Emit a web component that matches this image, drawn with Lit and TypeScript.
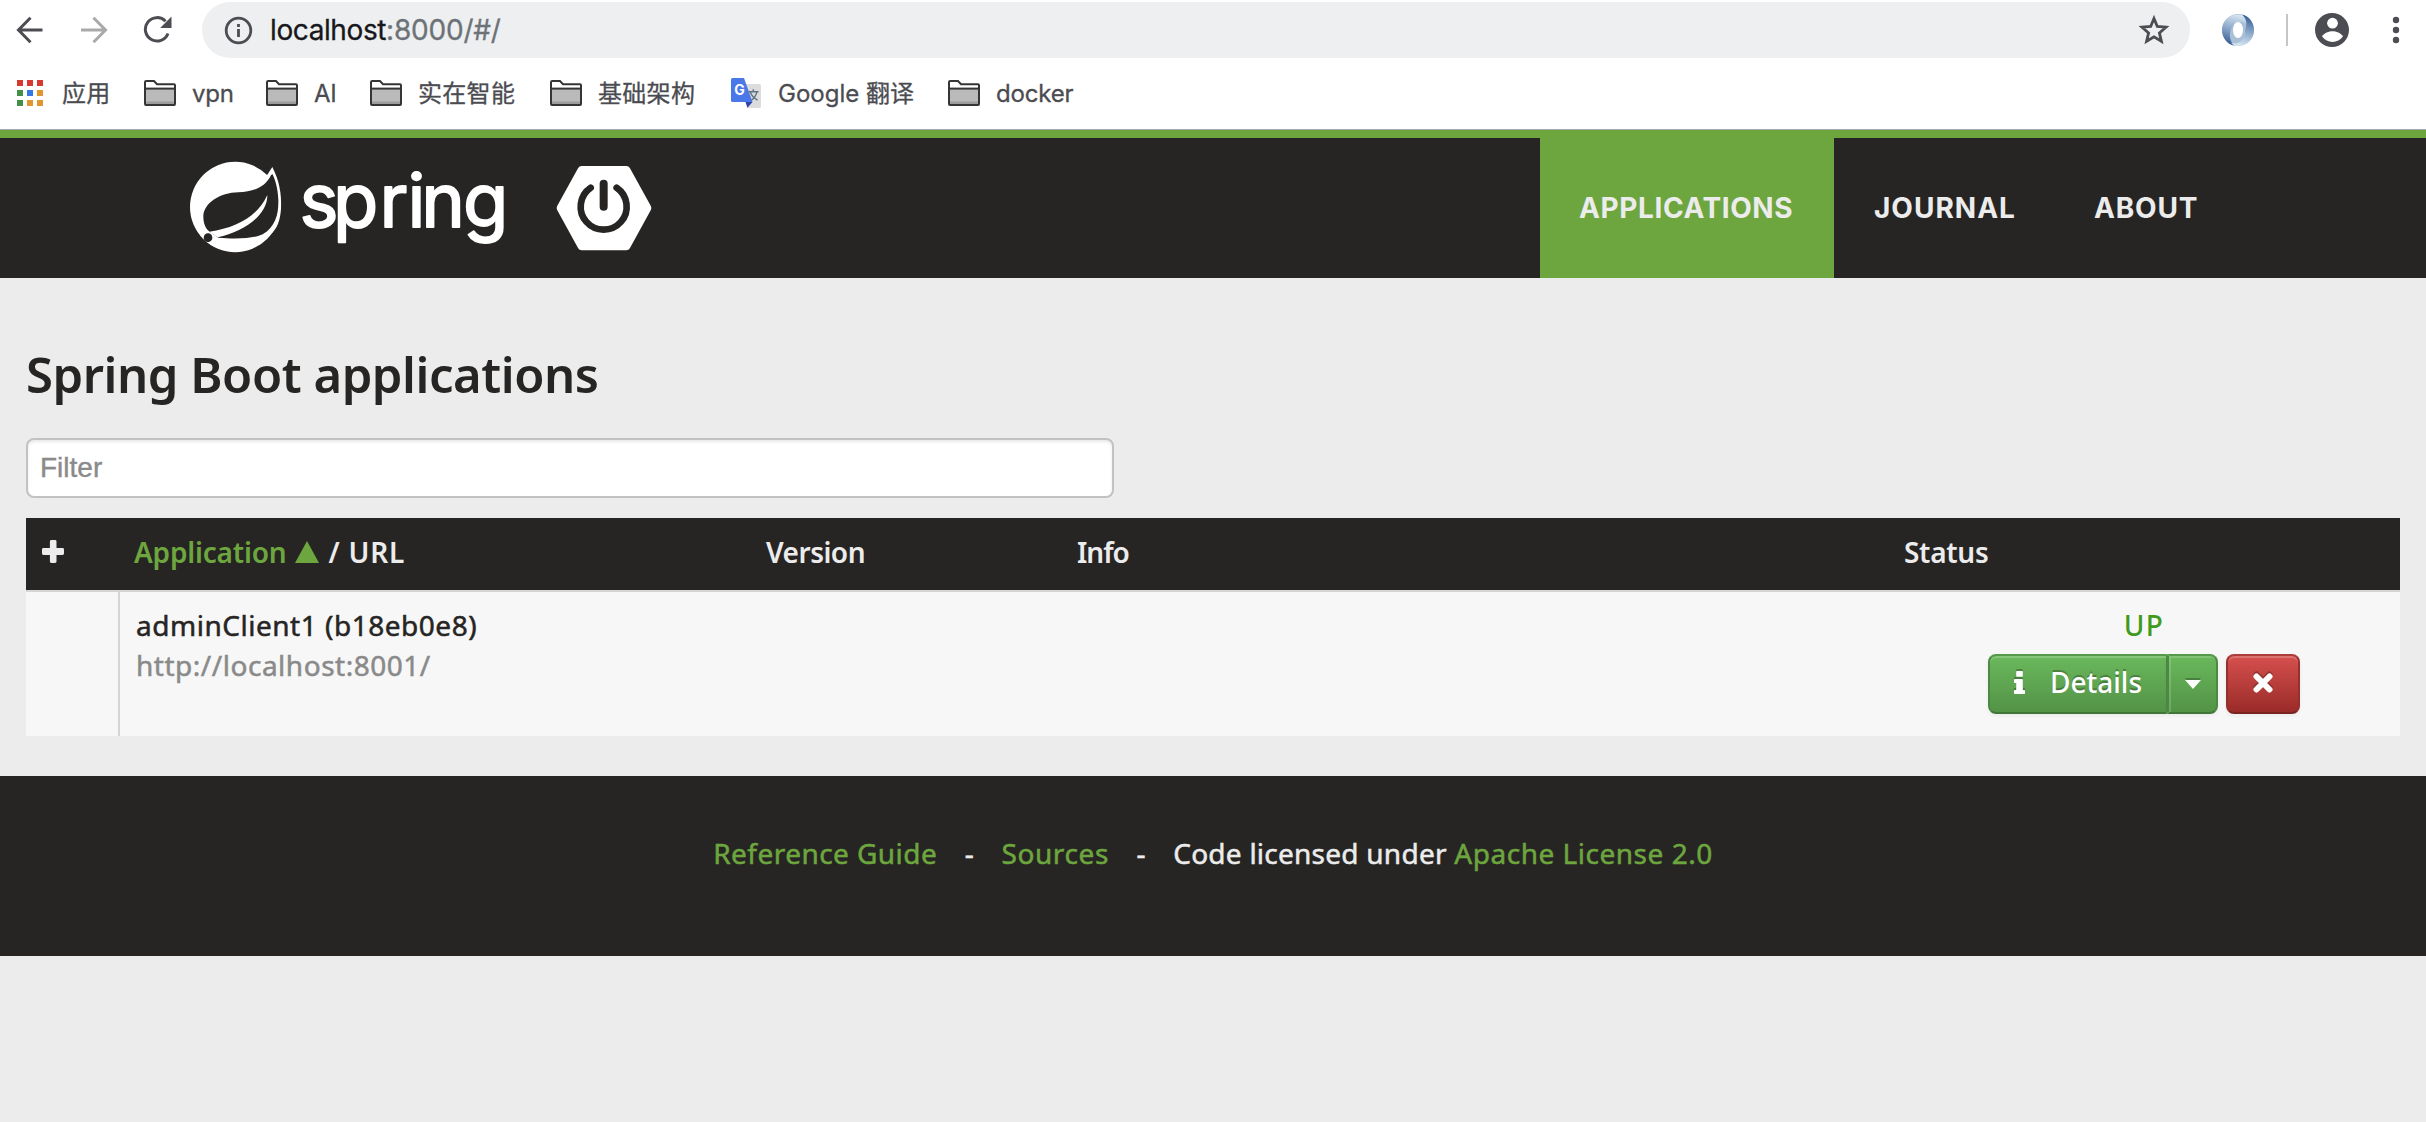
import { LitElement, html, css, svg } from "lit";
import { customElement, property } from "lit/decorators.js";

const folderIcon = html`<svg class="folder" width="32" height="26" viewBox="0 0 32 26">
  <path d="M1 24V2.2Q1 1 2.2 1H10l3 3.2h17q1 0 1 1V24q0 1-1 1H2q-1 0-1-1z" fill="#fff" stroke="#353535" stroke-width="2" />
  <path d="M2 9h28v15H2z" fill="#bababa" />
  <path d="M2 21.5h28V24H2z" fill="#9c9c9c" />
  <path d="M1 8.6h30" stroke="#353535" stroke-width="2" />
</svg>`;

const translateIcon = html`<svg class="translate" width="30" height="30" viewBox="0 0 30 30">
  <path d="M10 6h18.5Q30 6 30 7.500V28.500Q30 30 28.500 30H16z" fill="#dcdcdc" />
  <path d="M14.500 24H21.500L16.500 29.800z" fill="#3043a8" />
  <path d="M1.500 0H13l8.500 24H1.500Q0 24 0 22.500V1.500Q0 0 1.500 0z" fill="#4a78e8" />
  <text class="g" x="3.300" y="16.500">G</text>
  <g fill="none" stroke="#5b7480" stroke-width="1.400">
    <path d="M17.500 13.700H27.500M22.300 11.300V13.700M26 13.700C25 18 22.500 20.800 20.500 22.300M19.300 14C20.500 17.500 23.500 20.500 26.500 22" />
  </g>
</svg>`;

const appsIcon = html`<svg class="apps" width="26" height="26" viewBox="0 0 26 26">
  ${[
    ["#d93831", "#d93831", "#d93831"],
    ["#438e49", "#3577ea", "#e0952d"],
    ["#438e49", "#e0952d", "#e0952d"],
  ].map((row, r) => row.map((c, i) => svg`<rect x=${i * 10} y=${r * 10} width="6" height="6" fill=${c} />`))}
</svg>`;

interface Bookmark {
  label: string;
  kind: "apps" | "folder" | "translate";
  cls: string;
}

const bookmarks: Bookmark[] = [
  { label: "应用", kind: "apps", cls: "b-apps" },
  { label: "vpn", kind: "folder", cls: "b-vpn" },
  { label: "AI", kind: "folder", cls: "b-ai" },
  { label: "实在智能", kind: "folder", cls: "b-shizai" },
  { label: "基础架构", kind: "folder", cls: "b-infra" },
  { label: "Google 翻译", kind: "translate", cls: "b-google" },
  { label: "docker", kind: "folder", cls: "b-docker" },
];

@customElement("browser-chrome")
export class BrowserChrome extends LitElement {
  static styles = css`
    :host {
      display: block;
      box-sizing: border-box;
      height: 130px;
      background: #fff;
      border-bottom: 1px solid #a9a9ad;
      font-family: Inter, "Noto Sans CJK SC", sans-serif;
    }
    svg { display: block; flex: none; }
    .toolbar { display: flex; align-items: center; height: 60px; padding-left: 16px; }
    .forward { margin-left: 36px; }
    .reload { margin-left: 35px; }
    .omnibox {
      display: flex;
      align-items: center;
      box-sizing: border-box;
      width: 1988px;
      height: 56px;
      margin-left: 29px;
      padding: 0 20px 0 22px;
      border-radius: 28px;
      background: #eeeff1;
    }
    .url { flex: 1; margin-left: 16px; font-size: 28px; line-height: 56px; color: #17181b; letter-spacing: -0.4px; -webkit-text-stroke: 0.3px currentColor; }
    .port { color: #6d7277; letter-spacing: -0.2px; }
    .ext { margin-left: 32px; }
    .rule { width: 2px; height: 32px; margin-left: 32px; background: #c6c6c8; }
    .avatar { margin-left: 27px; }
    .menu { margin-left: 43px; }
    .bookmarks { display: flex; height: 66px; align-items: center; padding-left: 17px; }
    .item { display: flex; align-items: center; flex: none; font-size: 24px; line-height: 36px; color: #4b4c51; -webkit-text-stroke: 0.3px #4b4c51; letter-spacing: -0.2px; white-space: nowrap; }
    .item span { padding-top: 1px; }
    .b-apps { width: 127px; gap: 19px; letter-spacing: 0.200px; }
    .b-vpn { width: 122px; gap: 16px; }
    .b-ai { width: 104px; gap: 16px; }
    .b-shizai { width: 180px; gap: 16px; letter-spacing: 0.300px; }
    .b-infra { width: 181px; gap: 16px; letter-spacing: 0.300px; }
    .b-google { width: 217px; gap: 17px; letter-spacing: 0; }
    .b-docker { gap: 16px; }
    .g { font: 700 14px Inter, sans-serif; fill: #fff; stroke: none; }
  `;

  private icon(kind: Bookmark["kind"]) {
    return kind === "apps" ? appsIcon : kind === "folder" ? folderIcon : translateIcon;
  }

  render() {
    return html`
      <div class="toolbar">
        <svg width="28" height="28" viewBox="0 0 28 28" fill="none" stroke="#4c4d52" stroke-width="3"><path d="M26.500 14H3M14.500 1.800L2.500 14l12 12.200" /></svg>
        <svg class="forward" width="28" height="28" viewBox="0 0 28 28" fill="none" stroke="#a9a9ab" stroke-width="3"><path d="M1 14H25M13.500 1.800L25.500 14l-12 12.200" /></svg>
        <svg class="reload" width="30" height="28" viewBox="0 0 30 28">
          <path d="M22.500 5.200A11.700 11.700 0 1 0 25 17.500" fill="none" stroke="#4c4d52" stroke-width="3" />
          <path d="M28.500 0.500V12H17.200z" fill="#4c4d52" />
        </svg>
        <div class="omnibox">
          <svg width="30" height="30" viewBox="0 0 30 30">
            <circle cx="14.500" cy="15.500" r="12.300" fill="none" stroke="#4c4d52" stroke-width="2.800" />
            <path d="M13.100 9h2.800v3h-2.800zM13.100 14h2.800v8h-2.800z" fill="#4c4d52" />
          </svg>
          <div class="url">localhost<span class="port">:8000/#/</span></div>
          <svg width="32" height="32" viewBox="0 0 32 32">
            <path d="M16 4.500L19.300 12.500 28 13.200 21.400 18.900 23.400 27.300 16 22.800 8.600 27.300 10.600 18.900 4 13.200 12.700 12.500z" fill="none" stroke="#4c4d52" stroke-width="2.800" />
          </svg>
        </div>
        <svg class="ext" width="32" height="32" viewBox="0 0 32 32">
          <defs>
            <linearGradient id="ringA" x1="0.500" y1="0" x2="0.300" y2="1"><stop offset="0" stop-color="#d3e3ef" /><stop offset="0.500" stop-color="#86a3c6" /><stop offset="1" stop-color="#31588f" /></linearGradient>
            <linearGradient id="ringB" x1="0.700" y1="0" x2="0.500" y2="1"><stop offset="0" stop-color="#2f568f" /><stop offset="0.450" stop-color="#7e9dc2" /><stop offset="1" stop-color="#d5e5f0" /></linearGradient>
          </defs>
          <circle cx="16" cy="16" r="16" fill="#a9c0d8" />
          <path d="M21 1C8 -2 0 7 0 16c0 8 6 15 12 15.500C5 25 7 11 17 8c4-1 7 2 7 2 0-4-1-7-3-9z" fill="url(#ringA)" />
          <path d="M20 0.500c7 1.500 12 8 12 15.500 0 9-7 16-16 16-3 0-5-1-7-3 8 2 15-4 14-13 3-7 1-12-3-15.500z" fill="url(#ringB)" />
          <ellipse cx="16" cy="16" rx="5" ry="8" fill="#fff" />
        </svg>
        <div class="rule"></div>
        <svg class="avatar" width="34" height="34" viewBox="0 0 34 34">
          <circle cx="17" cy="17" r="17" fill="#4c4d52" />
          <circle cx="17.500" cy="10.200" r="5.400" fill="#fff" />
          <path d="M7 23.300C9 20 14 18.200 17.500 18.200S26 20 28 23.300C25.500 27 21.500 29 17.500 29S9.500 27 7 23.300z" fill="#fff" />
        </svg>
        <svg class="menu" width="8" height="28" viewBox="0 0 8 28" fill="#4c4d52"><circle cx="4" cy="4" r="3.200" /><circle cx="4" cy="14" r="3.200" /><circle cx="4" cy="24" r="3.200" /></svg>
      </div>
      <div class="bookmarks">
        ${bookmarks.map((b) => html`<div class="item ${b.cls}">${this.icon(b.kind)}<span>${b.label}</span></div>`)}
      </div>
    `;
  }
}

@customElement("site-header")
export class SiteHeader extends LitElement {
  static styles = css`
    :host { display: flex; box-sizing: border-box; height: 148px; border-top: 8px solid #6da63e; background: #262523; padding-left: 190px; }
    svg { display: block; flex: none; margin-top: 23px; }
    .word { margin-left: 16px; overflow: visible; }
    .boot { margin-left: 42px; }
    .wordmark { font: 400 74px Inter, sans-serif; fill: #fff; stroke: #fff; stroke-width: 1.800; stroke-linejoin: round; stroke-linecap: round; }
    nav { display: flex; margin-left: 886px; font: 700 28px/140px Inter, sans-serif; color: #ececec; letter-spacing: 0.6px; }
    .tab { height: 140px; padding: 0 40px; box-sizing: border-box; white-space: nowrap; }
    .active { width: 294px; padding-left: 39px; background: #6da63e; }
    .journal { width: 220px; letter-spacing: 1px; }
    .about { letter-spacing: 0.800px; }
  `;
  render() {
    return html`
      <svg width="92" height="92" viewBox="60 108 276 276">
        <circle cx="195.500" cy="246" r="135.500" fill="#fff" />
        <path d="M307 126C327 165 335 205 333 250C331 285 322 312 300 330L285 160Z" fill="#fff" />
        <path d="M303 151C285 188 250 200 205 202C150 203 100 235 100 275C100 303 113 318 124 323L145 338C190 342 250 342 278 328C317 305 326 265 325 225C324 190 315 162 307 147Z" fill="#262523" />
        <path d="M118 320C200 308 262 275 292 210C293 270 222 320 143 337Z" fill="#fff" />
        <circle cx="114" cy="338" r="13" fill="#262523" />
      </svg>
      <svg class="word" width="214" height="92" viewBox="298 161 214 92">
        <text class="wordmark" y="226.500" x="299.500 333 379.600 407.600 421.300 463">spring</text>
      </svg>
      <svg class="boot" width="100" height="92" viewBox="1152 108 300 276">
        <path d="M1235 135H1369L1432 249L1369 364H1235L1172 249Z" fill="#fff" stroke="#fff" stroke-width="24" stroke-linejoin="round" />
        <path d="M1340 188A69 69 0 1 1 1262 188" fill="none" stroke="#262523" stroke-width="20" stroke-linecap="round" />
        <path d="M1301 176V245" stroke="#262523" stroke-width="24" stroke-linecap="round" />
      </svg>
      <nav>
        <div class="tab active">APPLICATIONS</div>
        <div class="tab journal">JOURNAL</div>
        <div class="tab about">ABOUT</div>
      </nav>
    `;
  }
}

@customElement("application-table")
export class ApplicationTable extends LitElement {
  static styles = css`
    :host { display: block; font: 400 28px/40px "Noto Sans", sans-serif; color: #262523; }
    .row { display: grid; grid-template-columns: 94px 632px 313px 825px 510px; }
    .head { box-sizing: border-box; height: 74px; padding-top: 14px; background: #262523; border-bottom: 2px solid #d6d4d5; color: #ececec; font-weight: 600; }
    .head > * { padding-left: 14px; }
    .head .plus { display: block; padding: 8px 0 0 16px; }
    .app-title { display: flex; }
    .sorted { color: #6da63e; letter-spacing: -0.200px; }
    .tri { display: block; margin: 9px 9px 0 9px; }
    .u { letter-spacing: 0.800px; }
    .version { letter-spacing: -0.500px; }
    .head .info { letter-spacing: -1px; padding-left: 12px; }
    .status-title { letter-spacing: -0.300px; }
    .body { height: 144px; background: #f7f7f7; }
    .expand { border-right: 2px solid #d4d4d4; }
    .app { padding: 13px 0 0 16px; }
    .name { letter-spacing: 0.520px; -webkit-text-stroke: 0.500px currentColor; }
    .link { color: #8a8a8a; letter-spacing: 0.520px; -webkit-text-stroke: 0.500px currentColor; }
    .status { grid-column: 5; display: flex; flex-direction: column; align-items: center; padding: 13px 2px 0 0; }
    .up { color: #3f9a1d; font-weight: 500; letter-spacing: 1.500px; }
    .actions { display: flex; margin-top: 9px; color: #fff; }
    .btn {
      display: flex;
      align-items: center;
      box-sizing: border-box;
      height: 60px;
      border: 2px solid #4c8a43;
      border-color: #549a4a #4c8a43 #417639;
      background: linear-gradient(#6ab85c, #539347);
      box-shadow: inset 0 2px 0 rgba(255, 255, 255, 0.2), 0 2px 4px rgba(0, 0, 0, 0.05);
      text-shadow: 0 -2px 0 rgba(0, 0, 0, 0.25);
    }
    .btn svg { filter: drop-shadow(0 -2px 0 rgba(0, 0, 0, 0.25)); }
    .details { width: 179px; padding: 0 0 4px 24px; border-radius: 8px 0 0 8px; border-right-width: 1px; font-weight: 500; }
    .details span { margin-left: 25px; }
    .caret { width: 51px; justify-content: center; border-radius: 0 8px 8px 0; box-shadow: inset 2px 2px 0 rgba(255, 255, 255, 0.16), 0 2px 4px rgba(0, 0, 0, 0.05); }
    .remove { width: 74px; margin-left: 8px; padding-bottom: 2px; justify-content: center; border-radius: 8px; border-color: #ad3d3a #96302d #7a2321; background: linear-gradient(#d5504e, #9a2b28); }
  `;
  render() {
    return html`
      <div class="row head">
        <svg class="plus" width="22" height="23" viewBox="0 0 22 22" preserveAspectRatio="none"><path d="M9.300 0h3.800q1.400 0 1.400 1.400V7.600h6.100q1.400 0 1.400 1.400v4q0 1.400-1.400 1.400H14.500v6.200q0 1.400-1.400 1.400H9.300q-1.400 0-1.400-1.400V14.400H1.400Q0 14.400 0 13V9q0-1.400 1.400-1.400H7.900V1.400Q7.900 0 9.300 0z" fill="#ececec" /></svg>
        <div class="app-title">
          <span class="sorted">Application</span>
          <svg class="tri" width="24" height="22" viewBox="0 0 24 22"><path d="M12 0L24 22H0z" fill="#6da63e" /></svg>
          <span class="u">/ URL</span>
        </div>
        <div class="version">Version</div>
        <div class="info">Info</div>
        <div class="status-title">Status</div>
      </div>
      <div class="row body">
        <div class="expand"></div>
        <div class="app">
          <div class="name">adminClient1 (b18eb0e8)</div>
          <div class="link">http://localhost:8001/</div>
        </div>
        <div class="status">
          <div class="up">UP</div>
          <div class="actions">
            <div class="btn details">
              <svg width="11" height="23" viewBox="0 0 11 23" fill="#fff"><path d="M3 0h5q.8 0 .8.800V5q0 .8-.8.800H3q-.8 0-.8-.8V.800Q2.200 0 3 0zM.8 8H8q.8 0 .8.800V19H10.200q.8 0 .8.800v2.400q0 .8-.8.800H.8Q0 23 0 22.200V19.800Q0 19 .8 19H2.200V12H.8Q0 12 0 11.200V8.800Q0 8 .8 8z" /></svg>
              <span>Details</span>
            </div>
            <div class="btn caret"><svg width="16" height="9" viewBox="0 0 16 9" fill="#fff"><path d="M0 0h16L8 9z" /></svg></div>
            <div class="btn remove"><svg width="20" height="20" viewBox="0 0 20 20"><path d="M3.500 3.500l13 13M16.500 3.500l-13 13" stroke="#fff" stroke-width="6" stroke-linecap="round" /></svg></div>
          </div>
        </div>
      </div>
    `;
  }
}

@customElement("app-root")
export class AppRoot extends LitElement {
  @property() filter = "";

  static styles = css`
    :host { display: block; height: 1122px; overflow: hidden; background: #ececec; color: #262523; }
    main { box-sizing: border-box; height: 498px; padding: 66px 26px 0; }
    h1 { margin: 0 0 34px; font: 600 49px/60px "Noto Sans", sans-serif; letter-spacing: -0.450px; }
    .filter {
      display: block;
      box-sizing: border-box;
      width: 1088px;
      height: 60px;
      margin: 0 0 20px;
      padding: 0 12px;
      border: 2px solid #c2c2c2;
      border-radius: 8px;
      background: #fff;
      box-shadow: inset 0 2px 3px rgba(0, 0, 0, 0.09);
      font: 400 28px "Liberation Sans", sans-serif;
      outline: none;
    }
    .filter::placeholder { color: #8a8a8a; opacity: 1; -webkit-text-stroke: 0.400px #8a8a8a; }
    footer { display: flex; justify-content: center; box-sizing: border-box; height: 180px; padding-top: 57px; background: #262523; color: #ececec; font: 400 28px/40px "Noto Sans", sans-serif; letter-spacing: 0.250px; -webkit-text-stroke: 0.500px currentColor; white-space: pre; }
    .link { color: #6da63e; -webkit-text-stroke: 0.500px #6da63e; }
    .guide { letter-spacing: 0.450px; }
    .sources { letter-spacing: 0.600px; }
    .dash { margin: 0 27.500px; }
    .apache { letter-spacing: 0.520px; }
  `;
  render() {
    return html`
      <browser-chrome></browser-chrome>
      <site-header></site-header>
      <main>
        <h1>Spring Boot applications</h1>
        <input class="filter" placeholder="Filter" .value=${this.filter} />
        <application-table></application-table>
      </main>
      <footer>
        <span class="link guide">Reference Guide</span><span class="dash">-</span><span class="link sources">Sources</span><span class="dash">-</span><span>Code licensed under </span><span class="link apache">Apache License 2.0</span>
      </footer>
    `;
  }
}
